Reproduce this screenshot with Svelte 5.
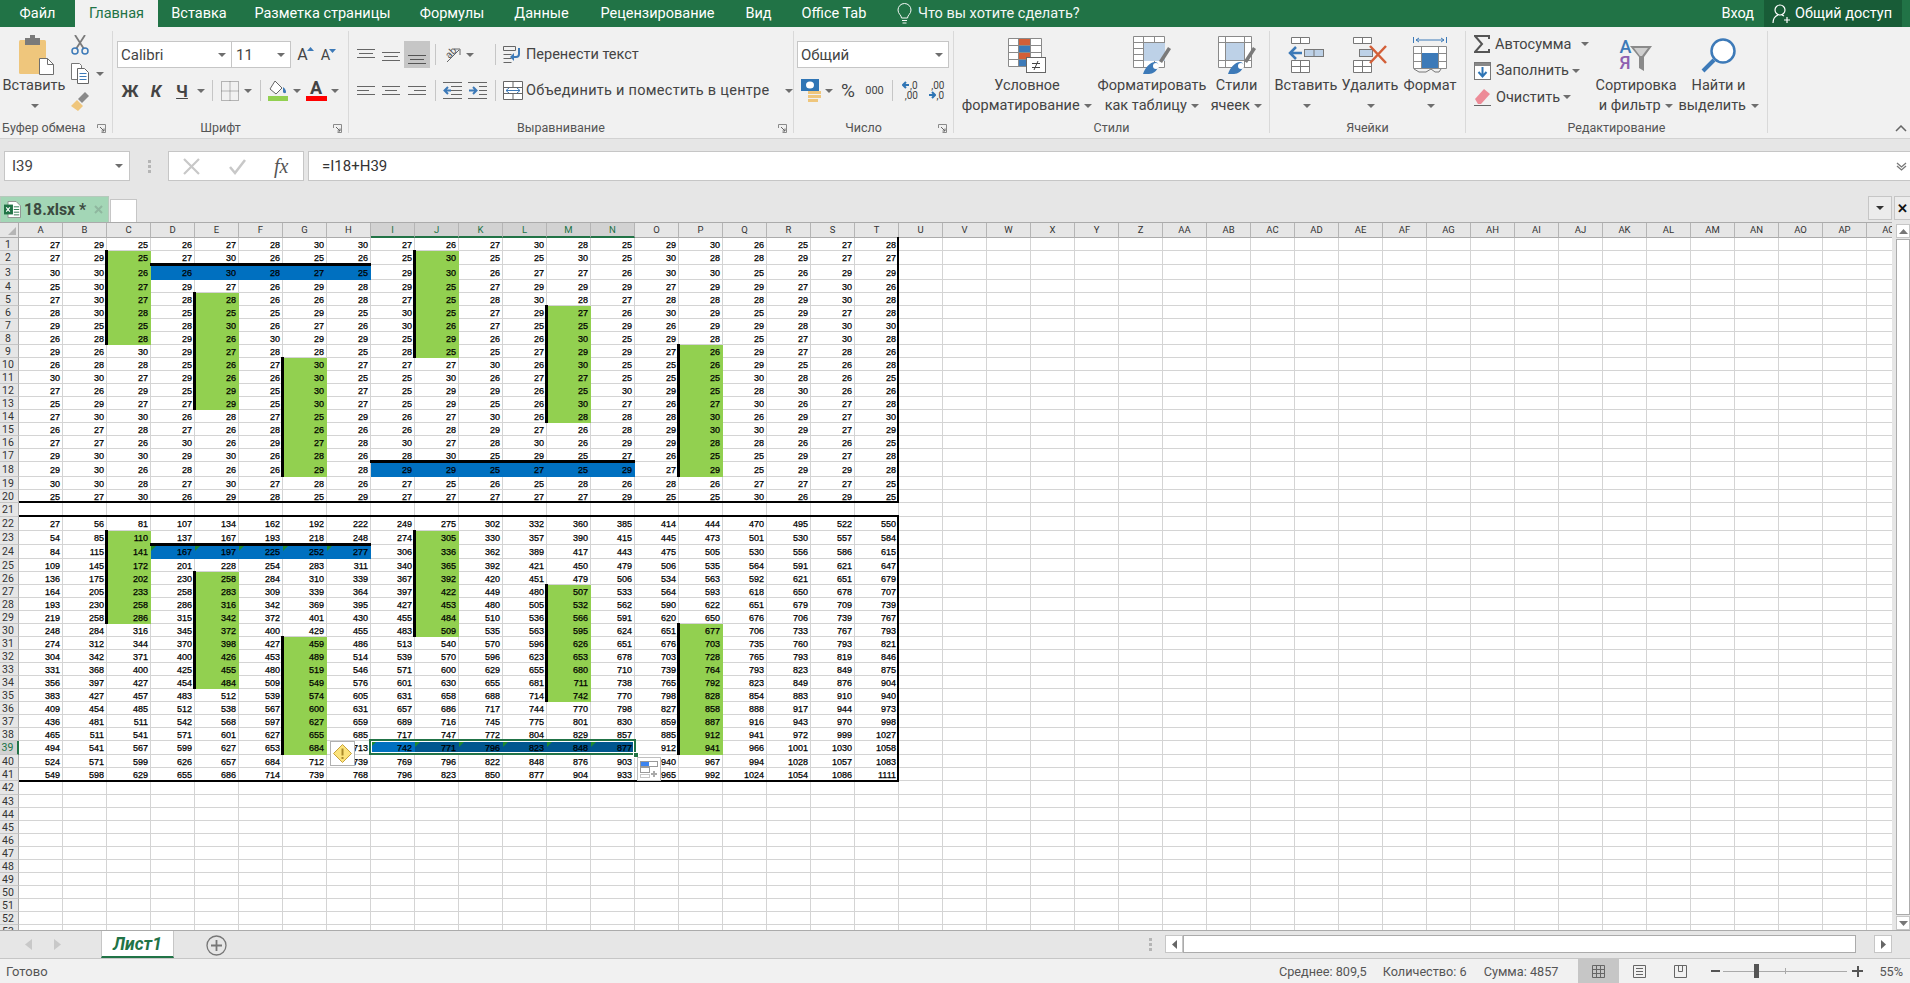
<script>
  const colNames = [];
  for (let i = 0; i < 43; i++) colNames.push(i < 26 ? String.fromCharCode(65 + i) : 'A' + String.fromCharCode(65 + i - 26));

  const tabs = [
    ['Файл', 75, ''], ['Главная', 83, 'active'], ['Вставка', 82, ''], ['Разметка страницы', 165, ''],
    ['Формулы', 94, ''], ['Данные', 85, ''], ['Рецензирование', 147, ''], ['Вид', 55, ''], ['Office Tab', 96, '']
  ];

  const data = `27 29 25 26 27 28 30 30 27 26 27 30 28 25 29 30 26 25 27 28
27 29 25 27 30 26 25 26 25 30 25 25 30 25 30 28 28 29 27 27
30 30 26 26 30 28 27 25 29 30 26 27 27 26 30 30 25 26 29 29
25 30 27 29 27 26 29 28 29 25 27 29 29 29 27 29 29 27 30 26
27 30 27 28 28 26 26 28 27 25 28 30 28 27 28 28 28 29 30 28
28 30 28 25 25 25 29 25 30 25 27 29 27 26 30 29 25 29 27 28
29 25 25 28 30 26 27 26 30 26 27 25 25 29 26 29 29 28 30 30
26 28 28 29 26 30 29 29 25 29 26 26 30 25 29 28 25 27 30 28
29 26 30 29 27 28 28 25 28 25 25 27 29 29 27 26 29 27 28 26
26 28 28 25 26 27 30 27 27 27 30 26 30 25 25 26 29 25 26 28
30 30 27 29 26 26 30 25 25 30 26 27 27 25 25 25 30 28 26 25
27 26 29 25 29 25 30 27 25 29 29 26 25 30 29 25 28 30 26 26
25 29 27 27 29 25 30 27 25 29 25 26 30 27 26 27 30 26 27 28
27 30 30 26 28 27 25 29 26 27 30 26 28 28 28 30 26 29 27 30
26 27 28 27 26 28 26 26 26 28 29 27 26 28 29 30 30 29 27 29
27 27 26 30 26 29 27 28 30 27 28 30 26 29 29 28 28 26 26 25
29 30 30 29 30 26 28 26 28 30 25 29 25 27 26 25 25 29 27 28
29 30 26 28 26 26 29 28 29 29 25 27 25 29 27 29 25 29 29 28
30 30 28 27 30 27 28 26 27 25 26 25 28 26 28 26 27 27 27 25
25 27 30 26 29 28 25 29 27 27 27 27 27 29 25 25 30 26 29 25

27 56 81 107 134 162 192 222 249 275 302 332 360 385 414 444 470 495 522 550
54 85 110 137 167 193 218 248 274 305 330 357 390 415 445 473 501 530 557 584
84 115 141 167 197 225 252 277 306 336 362 389 417 443 475 505 530 556 586 615
109 145 172 201 228 254 283 311 340 365 392 421 450 479 506 535 564 591 621 647
136 175 202 230 258 284 310 339 367 392 420 451 479 506 534 563 592 621 651 679
164 205 233 258 283 309 339 364 397 422 449 480 507 533 564 593 618 650 678 707
193 230 258 286 316 342 369 395 427 453 480 505 532 562 590 622 651 679 709 739
219 258 286 315 342 372 401 430 455 484 510 536 566 591 620 650 676 706 739 767
248 284 316 345 372 400 429 455 483 509 535 563 595 624 651 677 706 733 767 793
274 312 344 370 398 427 459 486 513 540 570 596 626 651 676 703 735 760 793 821
304 342 371 400 426 453 489 514 539 570 596 623 653 678 703 728 765 793 819 846
331 368 400 425 455 480 519 546 571 600 629 655 680 710 739 764 793 823 849 875
356 397 427 454 484 509 549 576 601 630 655 681 711 738 765 792 823 849 876 904
383 427 457 483 512 539 574 605 631 658 688 714 742 770 798 828 854 883 910 940
409 454 485 512 538 567 600 631 657 686 717 744 770 798 827 858 888 917 944 973
436 481 511 542 568 597 627 659 689 716 745 775 801 830 859 887 916 943 970 998
465 511 541 571 601 627 655 685 717 747 772 804 829 857 885 912 941 972 999 1027
494 541 567 599 627 653 684 713 742 771 796 823 848 877 912 941 966 1001 1030 1058
524 571 599 626 657 684 712 739 769 796 822 848 876 903 940 967 994 1028 1057 1083
549 598 629 655 686 714 739 768 796 823 850 877 904 933 965 992 1024 1054 1086 1111`
    .split('\n').map((l) => (l.trim() ? l.trim().split(' ') : []));

  const tall = { 2: 14, 3: 15, 18: 15, 21: 14, 22: 14, 23: 14, 24: 14, 39: 14, 42: 14 };
  const heights = [];
  for (let r = 1; r <= 53; r++) heights.push(tall[r] || 13);
  const line = [15];
  heights.forEach((h) => line.push(line[line.length - 1] + h));

  const GREEN = [[2,2,8],[4,5,13],[6,10,18],[9,2,9],[12,6,14],[15,9,18],[2,23,29],[4,26,34],[6,31,39],[9,23,30],[12,27,35],[15,30,39]];
  const BLUE = [[3,3,7],[18,8,13],[24,3,7],[39,8,13]];

  function cellClass(r, c) {
    let k = 'cell';
    if (GREEN.some(([gc, a, b]) => gc === c && r >= a && r <= b)) k += ' green';
    if (BLUE.some(([br, a, b]) => br === r && c >= a && c <= b)) k += ' blue';
    if ((r === 24 && c >= 3 && c <= 7) || (r === 39 && c >= 8 && c <= 13)) k += ' flag';
    if (r === 39 && c >= 9 && c <= 13) k += ' picked';
    return k;
  }

  const rules = [];
  for (const [c, a, b] of GREEN) rules.push([19 + 44 * c - 2, line[a - 1], 3, line[b] - line[a - 1] + 1]);
  for (const [r, a, b] of BLUE.slice(0, 3)) rules.push([19 + 44 * a - 1, line[r - 1] - 1, 44 * (b - a + 1) + 1, 3]);
  rules.push([19, line[20] - 1, 880, 2], [19, line[21] - 1, 880, 2], [19, line[41], 880, 2]);
  rules.push([897, line[0], 2, line[20] - line[0] + 1], [897, line[21] - 1, 2, line[41] - line[21] + 3]);

  const rows = heights.map((h, i) => ({ n: i + 1, h, vals: data[i] || [] }));
</script>

{#snippet caret()}<i class="caret"></i>{/snippet}
{#snippet launcher()}
  <svg class="launcher" width="9" height="9" viewBox="0 0 9 9"><path d="M.5 4V.5H8.500V8.500H4.500" fill="none" stroke="#8a8a8a"/><path d="M3 3l4 4M7 4.500V7H4.500" fill="none" stroke="#666"/></svg>
{/snippet}
{#snippet lines(a, b, c, d)}
  <svg width="20" height="18" viewBox="0 0 20 18"><path d={`M${a} 4.500H${b}M${c} 8.500H${d}M${a} 12.500H${b}`} stroke="#666" fill="none"/></svg>
{/snippet}
{#snippet brush()}
  <path d="M26 25L35 11l3 2-9 14z" fill="#7a7a7a"/><path d="M10 38c2-6 7-12 12-12 3 0 4 3 3 5-1 4-5 7-9 7z" fill="#3d7ab8"/><circle cx="23" cy="30" r="3" fill="#fff"/>
{/snippet}

<div class="app">
  <div class="tabs">
    {#each tabs as [name, w, state]}
      <div class="tab {state}" style="width:{w}px">{name}</div>
    {/each}
    <div class="tell">
      <svg width="15" height="22" viewBox="0 0 15 22"><path d="M4.500 15c0-3-3.500-4-3.500-8a6.500 6.500 0 0 1 13 0c0 4-3.500 5-3.500 8zM5 17.500h5M5.500 20h4" fill="none" stroke="#fff"/></svg>
      <span>Что вы хотите сделать?</span>
    </div>
    <div class="spring"></div>
    <div class="login">Вход</div>
    <div class="share">
      <svg width="19" height="20" viewBox="0 0 19 20"><circle cx="8" cy="6" r="5" fill="none" stroke="#fff" stroke-width="1.200"/><path d="M1 19c0-4 2.500-7 5-8M10 11l2 1M12 16h6M15 13v6" fill="none" stroke="#fff" stroke-width="1.200"/></svg>
      <span>Общий доступ</span>
    </div>
  </div>

  <div class="ribbon">
    <section class="group g-clip">
      <div class="body clip">
        <div class="big paste">
          <div class="bigicon">
            <svg width="35" height="40" viewBox="0 0 35 40"><rect x="0" y="5" width="27" height="34" rx="1.500" fill="#efc67c"/><rect x="6" y="3" width="15" height="7" fill="#7a7a7a"/><rect x="11" y="0" width="5" height="5" fill="#7a7a7a"/><path d="M20.500 23.500h8l6 6v10h-14z" fill="#fff" stroke="#6e6e6e"/><path d="M28.500 23.500v6h6" fill="none" stroke="#6e6e6e"/></svg>
          </div>
          <div class="tx">Вставить</div>
          <div class="tx">{@render caret()}</div>
        </div>
        <div class="clipsmall">
          <svg width="18" height="20" viewBox="0 0 18 20"><path d="M4 0l9 14M14 0L5 14" stroke="#7a7a7a" stroke-width="1.800" fill="none"/><circle cx="4" cy="16" r="3" fill="none" stroke="#3d7ab8" stroke-width="1.500"/><circle cx="14" cy="16" r="3" fill="none" stroke="#3d7ab8" stroke-width="1.500"/></svg>
          <div class="copy">
            <svg width="18" height="21" viewBox="0 0 18 21"><path d="M.5.500h8l2 2v14H.5z" fill="#fff" stroke="#777"/><path d="M6.500 5.500h7l4 4v11h-11z" fill="#fff" stroke="#666"/><path d="M8.500 10.500h7M8.500 13.500h7M8.500 16.500h7" stroke="#3d7ab8"/></svg>
            {@render caret()}
          </div>
          <svg width="18" height="19" viewBox="0 0 18 19"><path d="M0 14l6-6 6 6-5 5z" fill="#efc67c"/><path d="M7 7l5-5 2-2 4 4-2 2-5 5z" fill="#8a8a8a"/></svg>
        </div>
      </div>
      <div class="label left">Буфер обмена {@render launcher()}</div>
    </section>

    <section class="group g-font">
      <div class="body">
        <div class="fontboxes">
          <div class="box fname"><span>Calibri</span>{@render caret()}</div>
          <div class="box fsize"><span>11</span>{@render caret()}</div>
          <div class="grow"><span>A</span><svg width="7" height="4" viewBox="0 0 7 4"><path d="M0 4l3.500-4L7 4z" fill="#3d7ab8"/></svg></div>
          <div class="grow shrink"><span>A</span><svg width="7" height="4" viewBox="0 0 7 4"><path d="M0 0l3.500 4L7 0z" fill="#3d7ab8"/></svg></div>
        </div>
        <div class="fontrow">
          <b class="btnl">Ж</b>
          <b class="btnl it">К</b>
          <b class="btnl un">Ч</b>
          {@render caret()}
          <i class="sep"></i>
          <svg width="18" height="20" viewBox="0 0 18 20"><rect x=".5" y=".5" width="17" height="19" fill="none" stroke="#777" stroke-dasharray="1 1"/><path d="M9 .5v19M.5 10h17" stroke="#777" stroke-dasharray="1 1"/></svg>
          {@render caret()}
          <i class="sep"></i>
          <svg width="20" height="21" viewBox="0 0 20 21"><path d="M7 1l7 7-6 6-6-5z" fill="#fff" stroke="#666"/><path d="M15 7c2 2 3 3 3 5s-3 1-3 0z" fill="#3d7ab8"/><rect y="16" width="20" height="5" fill="#92d050"/></svg>
          {@render caret()}
          <div class="fcolor"><span>A</span><i></i></div>
          {@render caret()}
        </div>
      </div>
      <div class="label shift">Шрифт {@render launcher()}</div>
    </section>

    <section class="group g-align">
      <div class="body">
        <div class="alrow one">
          <svg width="20" height="18" viewBox="0 0 20 18"><path d="M1 3.500H19M3 7.500H17M1 11.500H19" stroke="#666" fill="none"/></svg>
          <svg width="20" height="18" viewBox="0 0 20 18"><path d="M1 6.500H19M3 10.500H17M1 14.500H19" stroke="#666" fill="none"/></svg>
          <div class="activeb"><svg width="20" height="14" viewBox="0 0 20 14"><path d="M1 3.500H19M3 7.500H17M1 11.500H19" stroke="#555" fill="none"/></svg></div>
          <i class="sep"></i>
          <svg class="orient" width="19" height="20" viewBox="0 0 19 20"><text x="3" y="12" font-size="10" font-family="Roboto, sans-serif" fill="#555" transform="rotate(-45 7 9)">ab</text><path d="M4 17L16 5M11 4h6v6" fill="none" stroke="#666"/></svg>
          {@render caret()}
          <span></span>
          <i class="sep"></i>
          <svg width="20" height="20" viewBox="0 0 20 20"><path d="M.5 1.500h12v4H.5zM.5 9.500h8M.5 13.500h8M.5 17.500h8" fill="none" stroke="#666"/><path d="M16 3v6a3 3 0 0 1-3 3H9" fill="none" stroke="#3d7ab8" stroke-width="2"/><path d="M11 8l-4 4 4 4z" fill="#3d7ab8"/></svg>
          <span class="txline">Перенести текст</span>
        </div>
        <div class="alrow two">
          {@render lines(1, 19, 1, 13)}
          {@render lines(1, 19, 4, 16)}
          {@render lines(1, 19, 7, 19)}
          <i class="sep"></i>
          <svg width="19" height="18" viewBox="0 0 19 18"><path d="M0 .5h19M8 4.500h11M8 8.500h11M8 12.500h11M0 16.500h19" stroke="#666"/><path d="M8 8.500H2M5 5l-3.500 3.500L5 12" stroke="#3d7ab8" stroke-width="2" fill="none"/></svg>
          <svg width="19" height="18" viewBox="0 0 19 18"><path d="M0 .5h19M11 4.500h8M11 8.500h8M11 12.500h8M0 16.500h19" stroke="#666"/><path d="M1 8.500h7M5 5l3.500 3.500L5 12" stroke="#3d7ab8" stroke-width="2" fill="none"/></svg>
          <i class="sep"></i>
          <svg width="20" height="19" viewBox="0 0 20 19"><path d="M.5.500h19v18H.5zM.5 6.500h19M.5 12.500h19M10 .5v6M10 12.500v6" fill="#fff" stroke="#666"/><path d="M3 9.500h14M6 7l-3 2.500L6 12M14 7l3 2.500L14 12" fill="none" stroke="#3d7ab8"/></svg>
          <span class="txline wide">Объединить и поместить в центре</span>
          {@render caret()}
        </div>
      </div>
      <div class="label shift">Выравнивание {@render launcher()}</div>
    </section>

    <section class="group g-num">
      <div class="body">
        <div class="box nfmt"><span>Общий</span>{@render caret()}</div>
        <div class="numrow">
          <svg width="20" height="24" viewBox="0 0 20 24"><rect width="18" height="12" fill="#2f75b5"/><ellipse cx="9" cy="6" rx="4" ry="3.500" fill="#fff"/><rect x="7" y="12" width="13" height="3" fill="#efc67c"/><rect x="7" y="16" width="13" height="3" fill="#efc67c"/><rect x="7" y="20" width="10" height="3" fill="#efc67c"/></svg>
          {@render caret()}
          <span class="pct">%</span>
          <span class="thou">000</span>
          <i class="sep"></i>
          <div class="dec">
            <svg width="7" height="8" viewBox="0 0 7 8"><path d="M7 4H2M4 1L1 4l3 3" stroke="#2f75b5" stroke-width="2" fill="none"/></svg><span>,0</span><span class="wide">,00</span>
          </div>
          <div class="dec two">
            <span class="wide">,00</span><svg width="7" height="8" viewBox="0 0 7 8"><path d="M0 4h5M3 1l3 3-3 3" stroke="#2f75b5" stroke-width="2" fill="none"/></svg><span>,0</span>
          </div>
        </div>
      </div>
      <div class="label shift">Число {@render launcher()}</div>
    </section>

    <section class="group g-styles">
      <div class="body flexrow">
        <div class="big w146">
          <div class="bigicon">
            <svg width="38" height="36" viewBox="0 0 38 36"><path d="M.5 1.500h33v28H.5zM.5 8.500h33M.5 15.500h33M.5 22.500h33M10.500 1.500v28M22.500 1.500v28" fill="#fff" stroke="#8a8a8a"/><rect x="11" y="2" width="11" height="6" fill="#d35f38"/><rect x="11" y="9" width="11" height="6" fill="#3d7ab8"/><rect x="11" y="16" width="11" height="6" fill="#d35f38"/><rect x="11" y="23" width="11" height="6" fill="#3d7ab8"/><rect x="18.500" y="20.500" width="19" height="15" fill="#fff" stroke="#666"/><path d="M24 26.500h8M24 30.500h8M30 24l-4 9" stroke="#444" fill="none"/></svg>
          </div>
          <div class="tx">Условное</div>
          <div class="tx">форматирование {@render caret()}</div>
        </div>
        <div class="big w104">
          <div class="bigicon">
            <svg width="38" height="38" viewBox="0 0 38 38"><path d="M.5.500h31v31H.5zM.5 6.500h31M.5 12.500h31M.5 18.500h31M.5 24.500h31M10.500.5v31M21.500.5v31" fill="#fff" stroke="#8a8a8a"/><rect x="11" y="7" width="21" height="18" fill="#bdd1e7"/>{@render brush()}</svg>
          </div>
          <div class="tx">Форматировать</div>
          <div class="tx">как таблицу {@render caret()}</div>
        </div>
        <div class="big w65">
          <div class="bigicon">
            <svg width="38" height="38" viewBox="0 0 38 38"><path d="M.5.500h33v31H.5z" fill="#fff" stroke="#8a8a8a"/><path d="M.5 6.500h33M.5 24.500h33M7.500.5v31M26.500.5v31" fill="none" stroke="#8a8a8a"/><rect x="8" y="7" width="18" height="17" fill="#bdd1e7"/>{@render brush()}</svg>
          </div>
          <div class="tx">Стили</div>
          <div class="tx">ячеек {@render caret()}</div>
        </div>
      </div>
      <div class="label">Стили</div>
    </section>

    <section class="group g-cells">
      <div class="body flexrow">
        <div class="big w72">
          <div class="bigicon">
            <svg width="36" height="36" viewBox="0 0 36 36"><path d="M3.500.5h18v6h-18zM12.500.5v6M3.500 23.500h18v12h-18zM3.500 29.500h18M12.500 23.500v12" fill="#fff" stroke="#777"/><rect x="16.500" y="12.500" width="19" height="7" fill="#bdd1e7" stroke="#777"/><path d="M26 12.500v7" stroke="#777"/><path d="M14 16H3M8 10l-6 6 6 6" fill="none" stroke="#3d7ab8" stroke-width="2.500"/></svg>
          </div>
          <div class="tx">Вставить</div>
          <div class="tx">{@render caret()}</div>
        </div>
        <div class="big w56">
          <div class="bigicon">
            <svg width="36" height="36" viewBox="0 0 36 36"><path d="M1.500.5h18v6h-18zM10.500.5v6M1.500 23.500h18v12h-18zM1.500 29.500h18M10.500 23.500v12" fill="#fff" stroke="#777"/><rect x="7.500" y="12.500" width="13" height="7" fill="#bdd1e7" stroke="#777"/><path d="M18 9l16 17M34 9L18 26" stroke="#d35f38" stroke-width="2.500"/></svg>
          </div>
          <div class="tx">Удалить</div>
          <div class="tx">{@render caret()}</div>
        </div>
        <div class="big w64">
          <div class="bigicon">
            <svg width="34" height="36" viewBox="0 0 34 36"><path d="M.5 0v6M33.500 0v6M3 3h28M6 1L3 3l3 2M28 1l3 2-3 2" fill="none" stroke="#3d7ab8"/><path d="M.5 9.500h33v22H.5zM.5 16.500h33M.5 24.500h33M8.500 9.500v22M25.500 9.500v22" fill="#fff" stroke="#8a8a8a"/><rect x="9" y="16" width="16" height="15" fill="#3d7ab8"/><path d="M1 32l5 3h7l5-3M18 32l4 3h4l2-3" fill="none" stroke="#777"/></svg>
          </div>
          <div class="tx">Формат</div>
          <div class="tx">{@render caret()}</div>
        </div>
      </div>
      <div class="label">Ячейки</div>
    </section>

    <section class="group g-edit">
      <div class="body flexrow">
        <div class="editcol">
          <div class="editrow">
            <svg width="16" height="18" viewBox="0 0 16 18"><path d="M15 4V1H1l7 8-7 8h14v-3" fill="none" stroke="#555" stroke-width="2"/></svg>
            <span class="a1">Автосумма</span>{@render caret()}
          </div>
          <div class="editrow">
            <svg width="17" height="18" viewBox="0 0 17 18"><rect x=".5" y=".5" width="16" height="17" fill="#fff" stroke="#777"/><rect x="1" y="1" width="15" height="3" fill="#888"/><path d="M8.500 5v9M4.500 10l4 4.500 4-4.500" fill="none" stroke="#2f75b5" stroke-width="2"/></svg>
            <span class="a2">Заполнить</span>{@render caret()}
          </div>
          <div class="editrow">
            <svg width="17" height="18" viewBox="0 0 17 18"><path d="M1 11L10 1l6 5-9 10H4z" fill="#ed8b97"/><path d="M0 17.500h17" stroke="#666"/></svg>
            <span class="a3">Очистить</span>{@render caret()}
          </div>
        </div>
        <div class="big w92">
          <div class="bigicon">
            <div class="sorticon">
              <div class="az"><span class="az-a">А</span><span class="az-z">Я</span></div>
              <svg width="22" height="25" viewBox="0 0 22 25"><path d="M0 0h22L14 11v14l-5-3V11z" fill="#8a8a8a"/><path d="M4 2h14l-6 8h-2z" fill="#cfcfcf"/></svg>
            </div>
          </div>
          <div class="tx">Сортировка</div>
          <div class="tx">и фильтр {@render caret()}</div>
        </div>
        <div class="big w73">
          <div class="bigicon">
            <svg width="36" height="35" viewBox="0 0 36 35"><circle cx="22" cy="13" r="11.500" fill="#fff" stroke="#3d7ab8" stroke-width="2.500"/><path d="M13 22L2 33" stroke="#3d7ab8" stroke-width="4"/></svg>
          </div>
          <div class="tx">Найти и</div>
          <div class="tx">выделить {@render caret()}</div>
        </div>
      </div>
      <div class="label">Редактирование</div>
    </section>

    <svg class="collapse" width="12" height="7" viewBox="0 0 12 7"><path d="M1 6l5-5 5 5" fill="none" stroke="#666" stroke-width="1.500"/></svg>
  </div>

  <div class="formula">
    <div class="namebox"><span>I39</span>{@render caret()}</div>
    <div class="dots"><i></i><i></i><i></i></div>
    <div class="fxbox">
      <svg width="17" height="17" viewBox="0 0 17 17"><path d="M1 1l15 15M16 1L1 16" stroke="#c8c8c8" stroke-width="2.200"/></svg>
      <svg width="17" height="17" viewBox="0 0 17 17"><path d="M1 9l5 6L16 2" fill="none" stroke="#c8c8c8" stroke-width="2.500"/></svg>
      <span class="fx">fx</span>
    </div>
    <div class="input">=I18+H39
      <svg class="fdown" width="11" height="9" viewBox="0 0 11 9"><path d="M1 1l4.500 4L10 1M1 4l4.500 4L10 4" fill="none" stroke="#777" stroke-width="1.300"/></svg>
    </div>
  </div>

  <div class="doctabs">
    <div class="doctab">
      <svg width="17" height="17" viewBox="0 0 19 19"><path d="M4.500.5h9l5 5v13h-14z" fill="#fff" stroke="#888"/><path d="M11 6.500h6M11 9.500h6M11 12.500h6M11 15.500h6" stroke="#217346"/><rect y="4" width="10" height="11" fill="#217346"/><path d="M2.500 7l4 5M6.500 7l-4 5" stroke="#fff" stroke-width="1.300"/></svg>
      <span class="docname">18.xlsx *</span>
      <svg class="docx" width="9" height="9" viewBox="0 0 9 9"><path d="M1 1l7 7M8 1L1 8" stroke="#8fb79f" stroke-width="2"/></svg>
    </div>
    <div class="docblank"></div>
    <div class="spring"></div>
    <div class="docbtn"><i class="caret dark"></i></div>
    <div class="docbtn closeb">✕</div>
  </div>

  <div class="sheet">
    <div class="gridwrap">
      <div class="hdr">
        <div class="corner"><svg width="8" height="8" viewBox="0 0 8 8"><path d="M8 0v8H0z" fill="#b5b5b5"/></svg></div>
        {#each colNames as name, c}
          <div class="colh" class:on={c >= 8 && c <= 13}>{name}</div>
        {/each}
      </div>
      {#each rows as row}
        <div class="row" style="height:{row.h}px">
          <div class="rowh" class:on={row.n === 39}>{row.n}</div>
          {#each colNames as _, c}
            <div class={cellClass(row.n, c)}>{row.vals[c] || ''}</div>
          {/each}
        </div>
      {/each}

      {#each rules as [x, y, w, h]}
        <div class="rule" style="left:{x}px;top:{y}px;width:{w}px;height:{h}px"></div>
      {/each}

      <div class="selection"><i></i></div>
      <div class="warn">
        <svg width="19" height="19" viewBox="0 0 19 19"><path d="M9.500.5l9 9-9 9-9-9z" fill="#fce37a" stroke="#c7a23a"/><path d="M9.500 4.500v7M9.500 13v2" stroke="#a98a2a" stroke-width="2"/></svg>
      </div>
      <div class="pasteopt">
        <svg width="18" height="17" viewBox="0 0 18 17"><rect x=".5" y=".5" width="17" height="5" fill="#fff" stroke="#999"/><rect x="1" y="1" width="8" height="4" fill="#3c84f0"/><rect x=".5" y="6.500" width="9" height="5" fill="#fff" stroke="#999"/><rect x=".5" y="13.500" width="9" height="3" fill="none" stroke="#888" stroke-dasharray="1 1"/><path d="M14 10v6M11 13h6" stroke="#aaa" stroke-width="2"/></svg>
      </div>
    </div>
    <div class="vscroll">
      <div class="vbtn"><svg width="9" height="5" viewBox="0 0 9 5"><path d="M0 5l4.500-5L9 5z" fill="#777"/></svg></div>
      <div class="vthumb"></div>
      <div class="vbtn"><svg width="9" height="5" viewBox="0 0 9 5"><path d="M0 0l4.500 5L9 0z" fill="#777"/></svg></div>
    </div>
  </div>

  <div class="sheetbar">
    <div class="navs">
      <svg width="7" height="11" viewBox="0 0 7 11"><path d="M7 0v11L0 5.500z" fill="#c8c8c8"/></svg>
      <svg width="7" height="11" viewBox="0 0 7 11"><path d="M0 0v11l7-5.500z" fill="#c8c8c8"/></svg>
    </div>
    <div class="stab">Лист1</div>
    <svg class="plus" width="21" height="21" viewBox="0 0 21 21"><circle cx="10.500" cy="10.500" r="9.500" fill="none" stroke="#777" stroke-width="1.300"/><path d="M10.500 5v11M5 10.500h11" stroke="#777" stroke-width="1.800"/></svg>
    <div class="spring"></div>
    <div class="threedots"><i></i><i></i><i></i></div>
    <div class="hscroll">
      <div class="hbtn"><svg width="5" height="9" viewBox="0 0 5 9"><path d="M5 0v9L0 4.500z" fill="#666"/></svg></div>
      <div class="hthumb"></div>
      <div class="htrack"></div>
      <div class="hbtn"><svg width="5" height="9" viewBox="0 0 5 9"><path d="M0 0v9l5-4.500z" fill="#666"/></svg></div>
    </div>
  </div>

  <div class="status">
    <span class="ready">Готово</span>
    <div class="spring"></div>
    <span class="st s1">Среднее: 809,5</span>
    <span class="st s2">Количество: 6</span>
    <span class="st s3">Сумма: 4857</span>
    <div class="view on">
      <svg width="13" height="13" viewBox="0 0 13 13"><path d="M.5.500h12v12H.5zM4.500.5v12M8.500.5v12M.5 4.500h12M.5 8.500h12" fill="none" stroke="#666"/></svg>
    </div>
    <div class="view">
      <svg width="13" height="13" viewBox="0 0 13 13"><path d="M.5.500h12v12H.5z" fill="none" stroke="#666"/><path d="M3 3.500h7M3 6.500h7M3 9.500h7" stroke="#666"/></svg>
    </div>
    <div class="view">
      <svg width="13" height="13" viewBox="0 0 13 13"><path d="M.5.500h12v12H.5zM4.500.5v6h4V.5" fill="none" stroke="#666"/></svg>
    </div>
    <div class="zoomer">
      <i class="zm"></i>
      <div class="slider"><i class="knob"></i><i class="tick"></i></div>
      <i class="zp"></i>
    </div>
    <span class="pctz">55%</span>
  </div>
</div>

<style>
  :global(body) { margin: 0; background: #e6e6e6; }
  * { box-sizing: border-box; }
  .app {
    width: 1910px; height: 983px; overflow: hidden; display: flex; flex-direction: column;
    font-family: Roboto, "Noto Sans", sans-serif; color: #444; background: #e6e6e6;
  }
  .spring { flex: 1; }
  .caret { display: inline-block; width: 0; height: 0; border: 4px solid transparent; border-top: 4px solid #6e6e6e; border-bottom: 0; vertical-align: middle; }
  .caret.dark { border-top-color: #333; }
  .sep { display: block; width: 1px; height: 21px; background: #c6c6c6; justify-self: center; }

  .tabs { height: 27px; background: #217346; display: flex; align-items: stretch; color: #fff; font-size: 14.5px; flex: none; }
  .tab { display: flex; align-items: center; justify-content: center; padding-bottom: 1px; }
  .tab.active { background: #f1f1f1; color: #217346; }
  .tell { display: flex; align-items: center; gap: 6px; margin-left: 15px; opacity: .95; }
  .login { display: flex; align-items: center; margin-right: 10px; }
  .share { width: 138px; margin-right: 8px; background: #185c37; display: flex; align-items: center; gap: 4px; padding-left: 8px; }

  .ribbon { height: 112px; flex: none; background: #f1f1f1; border-bottom: 1px solid #d2d2d2; display: flex; padding-top: 4px; position: relative; font-size: 14.5px; }
  .group { height: 102px; border-right: 1px solid #d9d9d9; flex: none; display: flex; flex-direction: column; }
  .body { height: 90px; flex: none; }
  .label { height: 12px; line-height: 14px; font-size: 12.5px; text-align: center; color: #555; position: relative; white-space: nowrap; }
  .label.left { text-align: left; padding-left: 2px; }
  .label.shift { padding-right: 20px; }
  .launcher { position: absolute; right: 6px; top: 3px; }
  .g-clip { width: 113px; }
  .g-font { width: 236px; }
  .g-align { width: 445px; }
  .g-num { width: 160px; }
  .g-styles { width: 316px; }
  .g-cells { width: 196px; }
  .g-edit { width: 302px; }

  .flexrow { display: flex; }
  .big { display: flex; flex-direction: column; align-items: center; flex: none; }
  .bigicon { height: 45px; display: flex; align-items: center; justify-content: center; padding-top: 3px; }
  .tx { height: 20px; line-height: 20px; white-space: nowrap; }
  .tx .caret { margin-left: 1px; }
  .w146 { width: 146px; } .w104 { width: 104px; } .w65 { width: 65px; }
  .w72 { width: 72px; } .w56 { width: 56px; } .w64 { width: 64px; }
  .w92 { width: 92px; } .w73 { width: 73px; }

  .clip { display: flex; }
  .paste { width: 68px; }
  .paste .bigicon { padding-left: 4px; }
  .clipsmall { display: flex; flex-direction: column; align-items: flex-start; gap: 8px; padding: 4px 0 0 3px; }
  .copy { display: flex; align-items: center; gap: 7px; }

  .box { background: #fff; border: 1px solid #c6c6c6; display: flex; align-items: center; justify-content: space-between; height: 27px; padding: 0 5px 0 3px; font-size: 15px; }
  .fontboxes { display: flex; margin: 10px 0 0 4px; }
  .fname { width: 114px; border-right: 0; }
  .fsize { width: 60px; padding-left: 4px; }
  .grow { width: 25px; margin-left: 2px; display: flex; justify-content: center; align-items: flex-start; padding-top: 4px; font-size: 16px; }
  .grow svg { margin-left: -1px; margin-top: 2px; }
  .grow.shrink { font-size: 14.500px; padding-top: 6px; margin-left: -2px; }
  .fontrow { display: grid; grid-template-columns: 26px 26px 26px 11px 12px 23px 14px 10px 26px 12px 26px 12px; align-items: center; justify-items: center; height: 27px; margin: 9px 0 0 4px; }
  .btnl { font-size: 17px; color: #444; font-weight: 700; }
  .btnl.it { font-style: italic; }
  .btnl.un { text-decoration: underline; }
  .fcolor { display: flex; flex-direction: column; align-items: center; font-weight: 700; font-size: 18px; line-height: 15px; }
  .fcolor i { display: block; width: 21px; height: 5px; background: #f00; margin-top: 1px; }

  .alrow { display: grid; align-items: center; justify-items: center; height: 27px; padding-left: 4px; }
  .alrow.one { grid-template-columns: 25px 26px 26px 10px 24px 10px 16px 10px 26px auto; margin-top: 10px; }
  .alrow.two { grid-template-columns: 25px 26px 26px 10px 25px 25px 10px 26px auto 16px; margin-top: 9px; }
  .activeb { width: 26px; height: 27px; background: #c6c6c6; display: flex; align-items: flex-end; justify-content: center; padding-bottom: 2px; }
  .orient { overflow: visible; }
  .txline { white-space: nowrap; justify-self: start; }
  .txline.wide { letter-spacing: .28px; }
  .alrow .caret { justify-self: end; }

  .nfmt { width: 152px; margin: 10px 0 0 3px; }
  .numrow { display: grid; grid-template-columns: 27px 10px 28px 25px 10px 26px 27px; align-items: center; justify-items: center; height: 27px; margin: 9px 0 0 3px; }
  .pct { font-size: 19px; }
  .thou { font-size: 11px; }
  .dec { display: grid; grid-template-columns: 8px 8px; justify-items: start; font-size: 10px; line-height: 10px; font-weight: 400; }
  .dec .wide { grid-column: 1 / 3; justify-self: end; }
  .dec.two .wide { justify-self: end; }

  .editcol { width: 124px; padding-left: 8px; }
  .editrow { height: 26.500px; display: flex; align-items: center; white-space: nowrap; }
  .editrow span { margin-left: 5px; }
  .a1 { margin-right: 10px; }
  .a2 { margin-right: 3px; }
  .a3 { margin-right: 3px; }
  .sorticon { display: flex; align-items: flex-start; }
  .az { display: flex; flex-direction: column; line-height: 16px; font-size: 18px; font-weight: 500; }
  .az-a { color: #3d7ab8; }
  .az-z { color: #8e5fb0; }
  .sorticon svg { margin: 7px 0 0 -1px; }
  .collapse { position: absolute; right: 3px; bottom: 6px; }

  .formula { height: 43px; flex: none; padding: 12px 0 0 4px; display: flex; align-items: stretch; background: #e6e6e6; }
  .namebox { width: 126px; height: 30px; background: #fff; border: 1px solid #c6c6c6; display: flex; align-items: center; justify-content: space-between; padding: 0 6px 0 7px; font-size: 15px; }
  .dots { width: 38px; height: 30px; display: flex; flex-direction: column; align-items: center; justify-content: center; gap: 2px; }
  .dots i { width: 3px; height: 3px; background: #b5b5b5; display: block; }
  .fxbox { width: 136px; height: 30px; background: #fff; border: 1px solid #c6c6c6; display: flex; align-items: center; gap: 29px; padding-left: 14px; }
  .fx { font-family: "Liberation Serif", serif; font-style: italic; font-size: 20px; color: #555; margin-left: -1px; }
  .input { flex: 1; height: 30px; margin-left: 4px; background: #fff; border: 1px solid #c6c6c6; border-right: 0; display: flex; align-items: center; padding-left: 13px; font-size: 15px; color: #333; position: relative; }
  .fdown { position: absolute; right: 3px; top: 10px; }

  .doctabs { height: 40px; flex: none; display: flex; align-items: flex-end; }
  .doctab { width: 109px; height: 26px; background: #a3d6b6; border: 1px solid #b6c9bc; border-bottom: 0; display: flex; align-items: center; padding-left: 3px; gap: 3px; }
  .docname { font-weight: 700; font-size: 15.800px; color: #3c4a40; white-space: nowrap; }
  .docx { margin-left: auto; margin-right: 5px; }
  .docblank { width: 27px; height: 23px; margin-left: 1px; background: #fff; border: 1px solid #c6c6c6; border-bottom: 0; }
  .docbtn { width: 24px; height: 24px; margin-bottom: 2px; background: #ececec; border: 1px solid #c6c6c6; display: flex; align-items: center; justify-content: center; margin-right: 2px; }
  .closeb { width: 16px; margin-right: 0; font-weight: 700; font-size: 13px; color: #111; border-right: 0; }

  .sheet { height: 708px; flex: none; display: flex; overflow: hidden; }
  .gridwrap { width: 1892px; flex: none; position: relative; overflow: hidden; background: #fff; }
  .hdr { height: 16px; display: flex; border-top: 1px solid #ababab; }
  .corner { width: 19px; flex: none; background: #e6e6e6; border-right: 1px solid #ababab; border-bottom: 1px solid #ababab; display: flex; align-items: flex-end; justify-content: flex-end; padding: 0 2px 2px 0; }
  .colh { width: 44px; flex: none; background: #e6e6e6; border-right: 1px solid #b5b5b5; border-bottom: 1px solid #ababab; text-align: center; font-size: 9.500px; line-height: 14px; color: #333; }
  .colh.on { background: #d2d2d2; border-bottom: 2px solid #217346; color: #217346; }
  .row { display: flex; }
  .rowh { width: 19px; flex: none; background: #e6e6e6; border-right: 1px solid #ababab; border-bottom: 1px solid #c6c6c6; text-align: center; font-size: 10.500px; display: flex; align-items: center; justify-content: center; color: #333; padding-right: 2px; }
  .rowh.on { background: #d2d2d2; border-right: 2px solid #217346; color: #217346; }
  .cell { width: 44px; flex: none; border-right: 1px solid #d4d4d4; border-bottom: 1px solid #d4d4d4; font-family: "Liberation Sans", Arial, sans-serif; font-size: 9px; color: #000; display: flex; align-items: center; justify-content: flex-end; padding: 1px 2px 0 0; line-height: 10px; -webkit-text-stroke: .25px #000; }
  .cell.green { background: #92d050; border-color: #92d050; }
  .cell.blue { background: #0070c0; border-color: #0070c0; }
  .cell.picked { background: #00568f; border-color: #00568f; }
  .cell.flag { position: relative; }
  .cell.flag::after { content: ""; position: absolute; left: 0; top: 1px; border-top: 5px solid #1f8a2e; border-right: 5px solid transparent; }
  .rule { position: absolute; background: #000; }
  .selection { position: absolute; left: 369px; top: 517px; width: 267px; height: 16px; border: 2px solid #217346; box-shadow: inset 0 0 0 1px #fff; }
  .selection i { position: absolute; right: -5px; bottom: -5px; width: 6px; height: 6px; background: #217346; border: 1px solid #fff; }
  .warn { position: absolute; left: 330px; top: 519px; width: 25px; height: 25px; background: #fff; border: 1px solid #b0b0b0; display: flex; align-items: center; justify-content: center; }
  .pasteopt { position: absolute; left: 637px; top: 535px; width: 24px; height: 24px; background: #fff; border: 1px solid #c0c0c0; display: flex; align-items: center; justify-content: center; }

  .vscroll { width: 18px; flex: none; background: #e6e6e6; display: flex; flex-direction: column; padding: 2px 0 0 4px; }
  .vbtn { height: 14px; background: #fff; border: 1px solid #c6c6c6; display: flex; align-items: center; justify-content: center; flex: none; }
  .vthumb { flex: 1; background: #fff; border: 1px solid #ababab; margin: 1px 0; }

  .sheetbar { height: 29px; flex: none; background: #e6e6e6; border-top: 1px solid #ababab; border-bottom: 1px solid #c6c6c6; display: flex; align-items: flex-start; }
  .navs { width: 101px; height: 27px; display: flex; align-items: center; padding-left: 25px; gap: 22px; flex: none; }
  .stab { width: 73px; height: 27px; background: #fff; border-left: 1px solid #c6c6c6; border-right: 1px solid #c6c6c6; border-bottom: 2px solid #217346; color: #217346; font-weight: 700; font-style: italic; font-size: 17.500px; display: flex; align-items: center; justify-content: center; }
  .plus { margin: 4px 0 0 32px; }
  .threedots { width: 22px; height: 27px; display: flex; flex-direction: column; justify-content: center; align-items: center; gap: 2px; margin-right: 4px; }
  .threedots i { display: block; width: 3px; height: 3px; background: #b5b5b5; }
  .hscroll { width: 727px; height: 18px; margin: 4px 18px 0 0; display: flex; background: #e6e6e6; flex: none; }
  .hbtn { width: 18px; background: #fff; border: 1px solid #c6c6c6; display: flex; align-items: center; justify-content: center; flex: none; }
  .hthumb { width: 673px; background: #fff; border: 1px solid #ababab; flex: none; }
  .htrack { flex: 1; }

  .status { height: 24px; flex: none; background: #f1f1f1; display: flex; align-items: center; font-size: 12.700px; color: #555; }
  .ready { margin-left: 6px; font-size: 13px; }
  .st { white-space: nowrap; }
  .s2 { margin-left: 16px; }
  .s3 { margin-left: 17px; }
  .view { width: 41px; height: 24px; display: flex; align-items: center; justify-content: center; flex: none; }
  .view.on { background: #c6c6c6; margin-left: 20px; }
  .zoomer { display: flex; align-items: center; margin-left: 10px; }
  .zm { display: block; width: 9px; height: 2px; background: #555; }
  .zp { display: block; width: 11px; height: 11px; background: linear-gradient(#555, #555) center / 100% 2px no-repeat, linear-gradient(#555, #555) center / 2px 100% no-repeat; margin-left: 5px; }
  .slider { width: 124px; height: 14px; margin-left: 3px; position: relative; background: linear-gradient(#aaa, #aaa) center / 100% 1px no-repeat; }
  .knob { position: absolute; left: 31px; top: 0; width: 5px; height: 14px; background: #555; }
  .tick { position: absolute; left: 62px; top: 4px; width: 1px; height: 6px; background: #aaa; }
  .pctz { margin: 0 7px 0 16px; }
</style>
